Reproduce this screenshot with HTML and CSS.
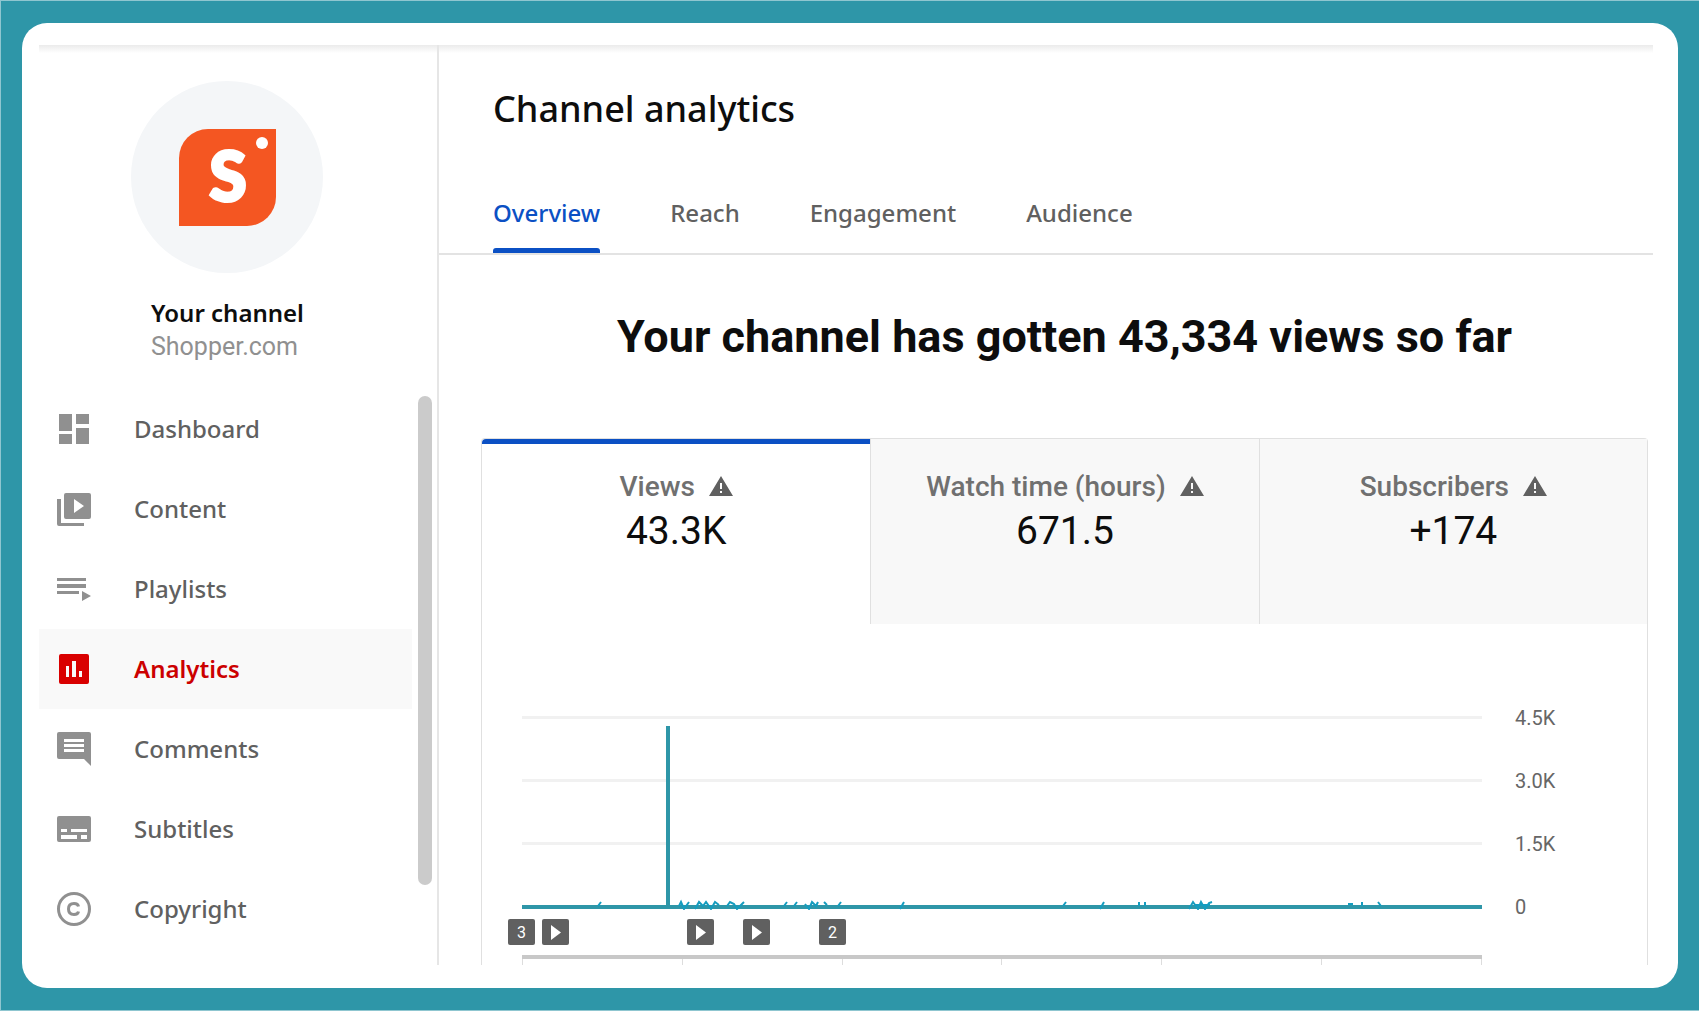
FILE: index.html
```html
<!DOCTYPE html>
<html lang="en">
<head>
<meta charset="utf-8">
<meta name="viewport" content="width=device-width, initial-scale=1">
<title>Channel analytics</title>
<link rel="stylesheet" href="styles.css">
</head>
<body>
<div class="panel">
  <div class="studio">
    <aside class="sidebar">
      <div class="profile">
        <div class="avatar">
          <svg class="logo" viewBox="0 0 97 97" role="img" aria-label="Shopper logo">
            <path d="M29 0H97V68A29 29 0 0 1 68 97H0V29A29 29 0 0 1 29 0Z" fill="#f45622"/>
            <circle cx="83" cy="14" r="6" fill="#fff"/>
            <text class="logo-letter" x="49" y="72" text-anchor="middle">S</text>
          </svg>
        </div>
        <div class="profile-text">
          <div class="profile-title">Your channel</div>
          <div class="profile-name">Shopper.com</div>
        </div>
      </div>
      <div class="nav-area">
        <nav class="nav" aria-label="Studio">
          <a class="nav-item" href="#dashboard">
            <svg class="icon" viewBox="0 0 40 40"><path d="M5 5h13v17H5zM22 5h13v10H22zM22 19h13v16H22zM5 25h13v10H5z"/></svg>
            Dashboard</a>
          <a class="nav-item" href="#content">
            <svg class="icon" viewBox="0 0 40 40"><path fill-rule="evenodd" d="M12 4h23a2 2 0 0 1 2 2v22a2 2 0 0 1-2 2H12a2 2 0 0 1-2-2V6a2 2 0 0 1 2-2zM20 10v14l10-7zM3 10h4v24h23v3H5a2 2 0 0 1-2-2z"/></svg>
            Content</a>
          <a class="nav-item" href="#playlists">
            <svg class="icon" viewBox="0 0 40 40"><path d="M3 9h29v3H3zM3 15h29v4H3zM3 22h22v3H3zM28 22l9 5-9 5z"/></svg>
            Playlists</a>
          <a class="nav-item active" href="#analytics" aria-current="page">
            <svg class="icon" viewBox="0 0 40 40"><path fill-rule="evenodd" d="M7 5h26a2 2 0 0 1 2 2v26a2 2 0 0 1-2 2H7a2 2 0 0 1-2-2V7a2 2 0 0 1 2-2zM12 17v11h3V17zM18 12v16h4V12zM25 22v6h3v-6z"/></svg>
            Analytics</a>
          <a class="nav-item" href="#comments">
            <svg class="icon" viewBox="0 0 40 40"><path fill-rule="evenodd" d="M5 3h30a2 2 0 0 1 2 2v32l-7-7H5a2 2 0 0 1-2-2V5a2 2 0 0 1 2-2zM10 10v3h20v-3zM10 15v3h20v-3zM10 20v3h20v-3z"/></svg>
            Comments</a>
          <a class="nav-item" href="#subtitles">
            <svg class="icon" viewBox="0 0 40 40"><path fill-rule="evenodd" d="M5 7h30a2 2 0 0 1 2 2v22a2 2 0 0 1-2 2H5a2 2 0 0 1-2-2V9a2 2 0 0 1 2-2zM7 20v3h6v-3zM17 20v3h16v-3zM7 26v4h16v-4zM27 26v4h6v-4z"/></svg>
            Subtitles</a>
          <a class="nav-item" href="#copyright">
            <svg class="icon" viewBox="0 0 40 40"><g fill="none" stroke="currentColor" stroke-width="3"><circle cx="20" cy="20" r="15.5"/><path d="M24.5 17.5Q24 14.500 20 14.500Q14.500 14.500 14.500 20T20 25.500Q24 25.500 24.500 22.500"/></g></svg>
            Copyright</a>
        </nav>
        <div class="scroll-thumb"></div>
      </div>
    </aside>

    <main class="main">
      <header class="header">
        <h1 class="title">Channel analytics</h1>
        <nav class="tabs" aria-label="Reports">
          <a class="tab selected" href="#overview" aria-current="page">Overview</a>
          <a class="tab" href="#reach">Reach</a>
          <a class="tab" href="#engagement">Engagement</a>
          <a class="tab" href="#audience">Audience</a>
        </nav>
      </header>

      <section class="overview">
        <h2 class="headline">Your channel has gotten 43,334 views so far</h2>
        <div class="card">
          <div class="metrics">
            <button class="metric current" type="button">
              <span class="metric-label">Views <svg class="warn" viewBox="0 0 24 20"><path fill-rule="evenodd" d="M12 0l12 20H0zM11 7v6h2V7zM11 15v2h2v-2z"/></svg></span>
              <span class="metric-value">43.3K</span>
            </button>
            <button class="metric" type="button">
              <span class="metric-label">Watch time (hours) <svg class="warn" viewBox="0 0 24 20"><path fill-rule="evenodd" d="M12 0l12 20H0zM11 7v6h2V7zM11 15v2h2v-2z"/></svg></span>
              <span class="metric-value">671.5</span>
            </button>
            <button class="metric" type="button">
              <span class="metric-label">Subscribers <svg class="warn" viewBox="0 0 24 20"><path fill-rule="evenodd" d="M12 0l12 20H0zM11 7v6h2V7zM11 15v2h2v-2z"/></svg></span>
              <span class="metric-value">+174</span>
            </button>
          </div>

          <div class="chart">
            <div class="plot">
              <svg class="series" viewBox="0 0 960 200" preserveAspectRatio="none" role="img" aria-label="Views over time">
                <path d="M0 7.500H960M0 70.500H960M0 133.500H960" stroke="#f1f1f1" stroke-width="3"/>
                <path d="M0 197H960" stroke="#2e96a8" stroke-width="4"/>
                <path d="M146 197V16" stroke="#2e96a8" stroke-width="4"/>
                <path d="M76 196l3-4M157 196l2-4l3 7l5-7M173 199l4-7l4 4l3-4l5 7l4-7l4 3M205 196l3-4l4 2l3 5l7-7M262 196l3-4M272 196l3-4M283 194l4 5l3-7l4 4l2-4M302 192l3 3M316 196l3-4M378 199l4-7M541 196l3-4M578 199l4-7M617 192v4M623 192v4M667 199l4-7l5 7l3-7l4 7l4-6l3-1M672 195h16M826 194h5M840 192v4M856 192l3 4" fill="none" stroke="#149cbf" stroke-width="2"/>
              </svg>
              <div class="markers">
                <span class="marker" style="left:0%">3</span>
                <span class="marker" style="left:3.500%"><svg viewBox="0 0 26 26"><path d="M9 6v15l10-7.500z"/></svg></span>
                <span class="marker" style="left:18.600%"><svg viewBox="0 0 26 26"><path d="M9 6v15l10-7.500z"/></svg></span>
                <span class="marker" style="left:24.500%"><svg viewBox="0 0 26 26"><path d="M9 6v15l10-7.500z"/></svg></span>
                <span class="marker" style="left:32.400%">2</span>
              </div>
              <div class="axis"><i></i><i></i><i></i><i></i><i></i><i></i></div>
            </div>
            <div class="scale"><span>4.5K</span><span>3.0K</span><span>1.5K</span><span>0</span></div>
          </div>
        </div>
      </section>
    </main>
  </div>
</div>
</body>
</html>
```
FILE: styles.css
```css
* { box-sizing: border-box; }

body {
  margin: 0;
  min-height: 100vh;
  display: flex;
  padding: 22px 21px;
  background: #2e96a8;
  border: 1px solid #8fc6d0;
  border-right: 0;
  font-family: Roboto, "Liberation Sans", sans-serif;
  color: #0d0d0d;
}

h1, h2 { margin: 0; }
a { color: inherit; text-decoration: none; }

.panel {
  flex: 1;
  min-width: 0;
  display: flex;
  padding: 22px 25px 23px 17px;
  background: #fff;
  border-radius: 25px;
}

.studio {
  flex: 1;
  min-width: 0;
  display: flex;
  background: linear-gradient(#ebebeb, #fff) top / 100% 8px no-repeat;
}

/* Sidebar */
.sidebar {
  flex: 0 0 400px;
  border-right: 2px solid #e6e6e6;
}

.profile { padding: 36px 0 25px 92px; }

.avatar {
  width: 192px;
  height: 192px;
  border-radius: 50%;
  background: #f4f6f8;
  display: grid;
  place-items: center;
}

.logo { width: 97px; height: 97px; }

.logo-letter {
  font: 900 68px Lato, sans-serif;
  fill: #fff;
  stroke: #fff;
  stroke-width: 3px;
}

.profile-text { padding: 23px 0 0 20px; }

.profile-title {
  font: 600 24px/34px "Noto Sans", sans-serif;
}

.profile-name {
  font-size: 25px;
  line-height: 34px;
  color: #909090;
}

.nav-area { display: flex; }

.nav { flex: 1; }

.nav-item {
  display: flex;
  align-items: center;
  gap: 40px;
  height: 80px;
  padding-left: 15px;
  font: 500 24px/34px "Noto Sans", sans-serif;
  color: #606060;
}

.nav-item.active {
  background: #f9f9f9;
  color: #c00;
  font-weight: 600;
}

.icon {
  width: 40px;
  height: 40px;
  fill: currentColor;
  color: #909090;
}

.active .icon { color: #d90000; }

.scroll-thumb {
  width: 14px;
  height: 489px;
  margin: 7px 5px 0 6px;
  border-radius: 7px;
  background: #cbcbcb;
}

/* Main column */
.main { flex: 1; min-width: 0; }

.header {
  padding: 40px 0 0 54px;
  border-bottom: 2px solid #e3e3e3;
}

.title {
  font: 500 36px/48px "Noto Sans", sans-serif;
}

.tabs {
  display: flex;
  gap: 70px;
  padding-top: 62px;
}

.tab {
  height: 58px;
  font: 500 24px/36px "Noto Sans", sans-serif;
  color: #606060;
}

.selected {
  color: #0b50c4;
  position: relative;
}

.selected::after {
  content: "";
  position: absolute;
  left: 0;
  right: 0;
  bottom: 0;
  height: 5px;
  border-radius: 3px 3px 0 0;
  background: #0b50c4;
}

.overview { padding: 52px 5px 0 42px; }

.headline {
  font-size: 45px;
  line-height: 60px;
  font-weight: 700;
  text-align: center;
}

.card {
  margin-top: 71px;
  border: 1px solid #e0e0e0;
  border-bottom: 0;
  border-radius: 4px 4px 0 0;
}

.metrics {
  display: grid;
  grid-template-columns: repeat(3, 1fr);
}

.metric {
  height: 185px;
  padding: 32px 0 0;
  border: 0;
  border-left: 1px solid #e0e0e0;
  background: #f8f8f8;
  font-family: inherit;
  color: inherit;
  display: flex;
  flex-direction: column;
  align-items: center;
}

.metric.current {
  padding-top: 27px;
  border-left: 0;
  border-top: 5px solid #0b50c4;
  border-radius: 4px 0 0 0;
  background: #fff;
}

.metric-label {
  display: flex;
  align-items: center;
  gap: 14px;
  font-size: 28px;
  font-weight: 500;
  line-height: 32px;
  color: #707070;
}

.warn {
  width: 24px;
  height: 20px;
  margin-bottom: 2px;
  fill: #606060;
}

.metric-value { font-size: 39px; line-height: 56px; }

/* Chart */
.chart {
  display: flex;
  gap: 33px;
  padding: 86px 90px 0 40px;
}

.plot { flex: 1; min-width: 0; }

.series { display: block; width: 100%; height: 200px; }

.markers {
  position: relative;
  height: 45px;
}

.marker {
  position: absolute;
  top: 9px;
  width: 27px;
  height: 26px;
  margin-left: -14px;
  border-radius: 2px;
  background: #606060;
  color: #fff;
  font-size: 16px;
  line-height: 27px;
  text-align: center;
}

.marker svg { display: block; width: 26px; height: 26px; fill: #fff; }

.axis {
  display: flex;
  height: 10px;
  border-top: 4px solid #c8c8c8;
}

.axis i {
  flex: 1;
  border-left: 1px solid #ddd;
}

.axis i:last-child { border-right: 1px solid #ddd; }

.scale {
  width: 42px;
  display: flex;
  flex-direction: column;
  gap: 39px;
  margin-top: -4px;
  font-size: 20px;
  line-height: 24px;
  color: #666;
}
```
